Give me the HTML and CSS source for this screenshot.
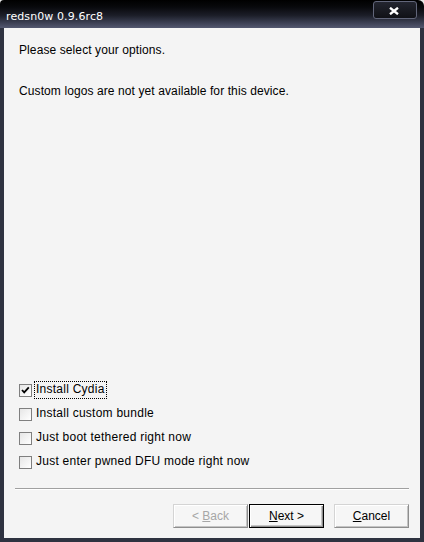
FILE: index.html
```html
<!DOCTYPE html>
<html lang="en">
<head>
    <meta charset="UTF-8">
    <meta name="viewport" content="width=device-width, initial-scale=1.0">
    <title>redsn0w 0.9.6rc8</title>
    <link rel="stylesheet" href="styles.css">
</head>
<body>
    <div class="window">
        <div class="titlebar">
            <span class="title">redsn0w 0.9.6rc8</span>
            <span class="close">
                <svg width="10" height="8" viewBox="0 0 10 8"><path d="M1 0.8 L9 7.2 M9 0.8 L1 7.2" stroke="#fff" stroke-width="2.4" fill="none"/></svg>
            </span>
        </div>
        <div class="client">
            <p class="msg first">Please select your options.</p>
            <p class="msg">Custom logos are not yet available for this device.</p>
            <div class="spacer"></div>
            <ul class="options">
                <li class="option">
                    <span class="box"><svg width="11" height="11" viewBox="0 0 11 11"><path d="M2 5 L4.2 7.4 L8.8 2.4" stroke="#000" stroke-width="1.8" fill="none"/></svg></span>
                    <span class="label focus">Install Cydia</span>
                </li>
                <li class="option">
                    <span class="box"></span>
                    <span class="label">Install custom bundle</span>
                </li>
                <li class="option">
                    <span class="box"></span>
                    <span class="label">Just boot tethered right now</span>
                </li>
                <li class="option">
                    <span class="box"></span>
                    <span class="label">Just enter pwned DFU mode right now</span>
                </li>
            </ul>
            <div class="separator"></div>
            <div class="buttons">
                <button class="btn disabled">&lt; <u>B</u>ack</button>
                <button class="btn default"><u>N</u>ext &gt;</button>
                <button class="btn cancel"><u>C</u>ancel</button>
            </div>
        </div>
    </div>
</body>
</html>
```

FILE: styles.css
```css
body { margin: 0; background: #e9e9e9; font-family: "Liberation Sans", Arial, sans-serif; }
.window { width: 424px; height: 542px; display: flex; flex-direction: column; }

.titlebar { height: 28px; display: flex; justify-content: space-between; align-items: flex-start; border-radius: 4px 6px 0 0;
    background: linear-gradient(#000000 0%, #08090c 25%, #1c1e28 55%, #3a3e51 80%, #535870 100%); }
.title { font-family: "DejaVu Sans", sans-serif; font-size: 11px; line-height: 13px; color: #fff; padding: 10px 0 0 6px; letter-spacing: 0.1px; }
.close { width: 40px; height: 16px; margin: 1px 7px 0 0; display: flex; align-items: center; justify-content: center; padding-right: 2px; box-sizing: content-box;
    border: 1px solid #62667a; border-radius: 3px; background: linear-gradient(#23252f, #101116); }
.close svg { margin-top: 1px; }

.client { flex: 1; display: flex; flex-direction: column; padding: 0 11px 10px 11px; background: #f4f4f4;
    border-left: 4px solid #2e3240; border-right: 4px solid #2e3240; border-bottom: 4px solid #2e3240; }

.msg { margin: 28px 0 0 4px; font-size: 12px; line-height: 13px; color: #000; letter-spacing: 0.1px; }
.msg.first { margin-top: 16px; }
.spacer { flex: 1; }

.options { list-style: none; margin: 0 0 14px 4px; padding: 0; }
.option { height: 24px; display: flex; align-items: center; font-size: 12px; color: #000; }
.box { width: 11px; height: 11px; border: 1px solid #7f7f7f; background: linear-gradient(135deg, #e6e6e6, #ffffff); display: flex; }
.label { margin-left: 3px; padding: 1px 1px 2px 1px; line-height: 13px; letter-spacing: 0.25px; }
.label.focus { outline: 1px dotted #000; outline-offset: 0; }

.separator { height: 1px; border-top: 1px solid #a0a0a0; background: #ffffff; margin-bottom: 14px; }

.buttons { display: flex; justify-content: flex-end; }
.btn { width: 75px; height: 24px; padding: 0; font-family: "Liberation Sans", Arial, sans-serif; font-size: 12px; color: #000; background: #f6f6f6;
    border: 1px solid; border-color: #d4d4d4 #8e8e8e #8e8e8e #d4d4d4; box-shadow: inset 1px 1px #ffffff, inset -1px -1px #c4c4c4; }
.btn.disabled { color: #a6a6a6; margin-right: 1px; }
.btn.default { border-color: #000; box-shadow: inset 1px 1px #ffffff, inset -1px -1px #8e8e8e, inset -2px -2px #c4c4c4; margin-right: 10px; }
```
